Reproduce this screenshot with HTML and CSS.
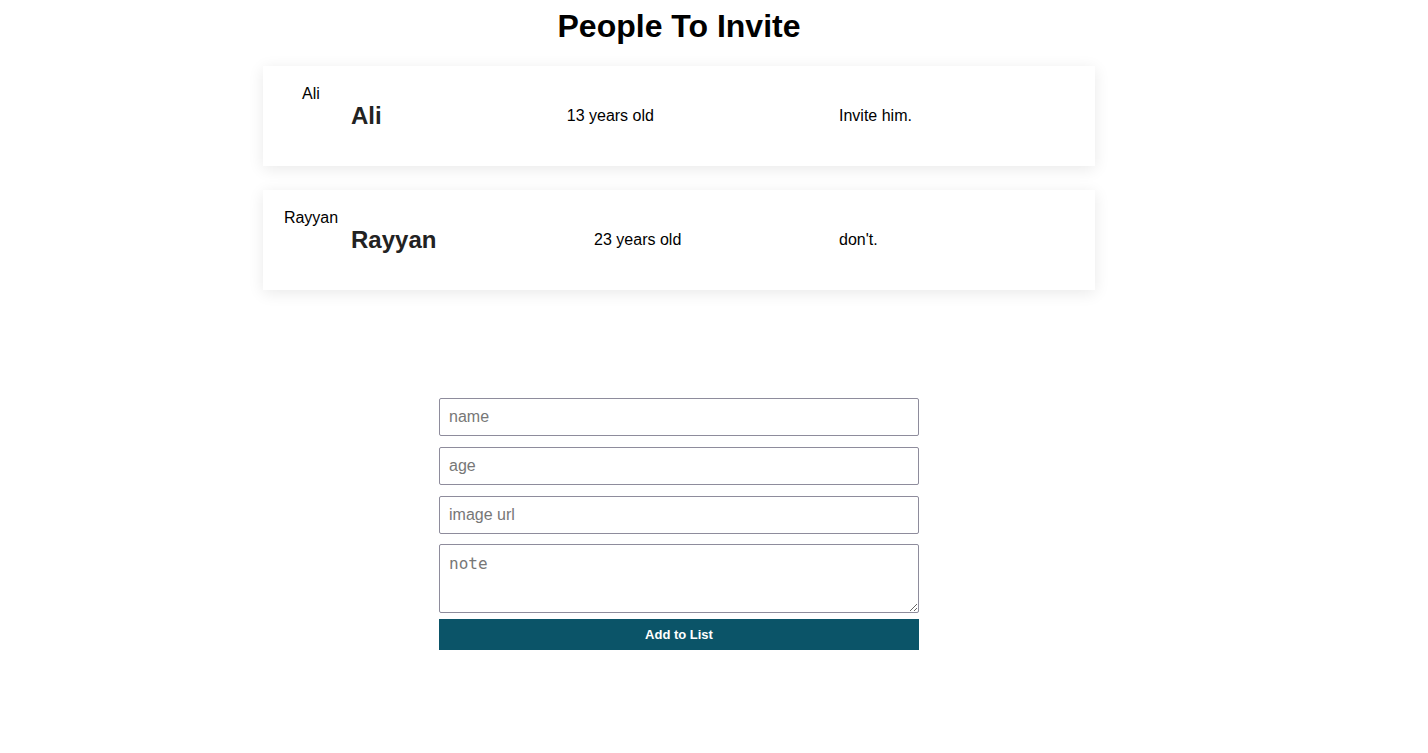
FILE: index.html
```
<!DOCTYPE html>
<html lang="en">
<head>
<meta charset="utf-8">
<title>People To Invite</title>
<link rel="stylesheet" href="styles.css">
</head>
<body>
<div class="page">
  <div class="app">
    <h1 class="title">People To Invite</h1>
    <ul class="list">
      <li class="card">
        <div class="card-header">
          <div class="card-img"><span>Ali</span></div>
          <h2 class="card-name">Ali</h2>
        </div>
        <p class="card-age">13 years old</p>
        <p class="card-note">Invite him.</p>
      </li>
      <li class="card">
        <div class="card-header">
          <div class="card-img"><span>Rayyan</span></div>
          <h2 class="card-name">Rayyan</h2>
        </div>
        <p class="card-age">23 years old</p>
        <p class="card-note">don't.</p>
      </li>
    </ul>
    <form class="add-form">
      <input class="add-input" type="text" placeholder="name">
      <input class="add-input" type="text" placeholder="age">
      <input class="add-input" type="text" placeholder="image url">
      <textarea class="add-textarea" placeholder="note"></textarea>
      <button class="add-btn" type="button">Add to List</button>
    </form>
  </div>
</div>
</body>
</html>
```

FILE: styles.css
```
html, body {
  margin: 0;
  padding: 0;
  background: #fff;
}
body {
  font-family: "Liberation Sans", Arial, sans-serif;
  color: #000;
}
.page {
  width: 1358px;
}
.app {
  width: 832px;
  margin: 0 auto;
  display: flex;
  flex-direction: column;
  align-items: center;
}
.title {
  margin: 8px 0 0;
  font-size: 32px;
  line-height: 36px;
  font-weight: 700;
  color: #000;
}
.list {
  list-style: none;
  margin: 22px 0 0;
  padding: 0;
  width: 100%;
  display: flex;
  flex-direction: column;
  gap: 24px;
}
.card {
  display: flex;
  justify-content: space-between;
  align-items: center;
  padding: 16px;
  background: #fff;
  box-shadow: 0 3px 15px rgba(0, 0, 0, 0.09);
}
.card-header {
  display: flex;
  align-items: center;
}
.card-img {
  width: 64px;
  height: 64px;
  margin-right: 8px;
  display: flex;
  justify-content: center;
  align-items: flex-start;
  overflow: visible;
  font-size: 16px;
  line-height: 18px;
  padding-top: 1px;
  box-sizing: border-box;
}
.card-name {
  margin: 20px 0;
  font-size: 24px;
  line-height: 28px;
  font-weight: 700;
  color: #222;
}
.card-age {
  margin: 0;
  font-size: 16px;
}
.card-note {
  margin: 0;
  width: 240px;
  font-size: 16px;
}
.add-form {
  width: 480px;
  margin-top: 108px;
  display: flex;
  flex-direction: column;
}
.add-input,
.add-textarea {
  box-sizing: border-box;
  width: 100%;
  border: 1px solid #8e8c9c;
  border-radius: 2px;
  padding: 0 9px;
  background: #fff;
  outline: none;
}
.add-input {
  height: 38px;
  font-family: "Liberation Sans", Arial, sans-serif;
  font-size: 16px;
  margin-bottom: 11px;
}
.add-input:nth-of-type(3) {
  margin-bottom: 10px;
}
.add-textarea {
  height: 69px;
  padding-top: 9px;
  font-family: "DejaVu Sans Mono", monospace;
  font-size: 16px;
  margin: 0;
  display: block;
}
.add-input::placeholder,
.add-textarea::placeholder {
  color: #777;
}
.add-btn {
  margin-top: 6px;
  height: 31px;
  border: none;
  background: #0b5468;
  color: #fff;
  font-family: "Liberation Sans", Arial, sans-serif;
  font-weight: 700;
  font-size: 13px;
  cursor: pointer;
}
```
